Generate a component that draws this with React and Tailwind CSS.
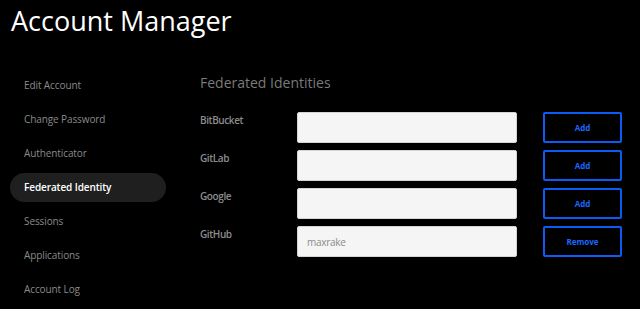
import { useState } from 'react'

const nav = [
  'Edit Account',
  'Change Password',
  'Authenticator',
  'Federated Identity',
  'Sessions',
  'Applications',
  'Account Log',
]

const providers = [
  { name: 'BitBucket', value: '' },
  { name: 'GitLab', value: '' },
  { name: 'Google', value: '' },
  { name: 'GitHub', value: 'maxrake' },
]

export default function App() {
  const [active, setActive] = useState('Federated Identity')

  return (
    <div className="w-[640px] h-[309px] overflow-hidden bg-black text-white" style={{ fontFamily: '"Open Sans", "Noto Sans", sans-serif' }}>
      <h1 className="pl-[11px] pt-[2px] text-[27px] leading-[38px] font-normal">Account Manager</h1>

      <div className="flex mt-[31px]">
        {/* sidebar */}
        <nav className="w-[200px] pl-[10px] flex flex-col gap-[5px]">
          {nav.map(item => (
            <button
              key={item}
              onClick={() => setActive(item)}
              className={`w-[156px] h-[29px] rounded-full pl-[14px] text-left text-[10px] tracking-[-0.1px] ${
                active === item ? 'bg-[#1f1f1f] text-white font-semibold' : 'text-[#8a8a8a]'
              }`}
            >
              {item}
            </button>
          ))}
        </nav>

        {/* content */}
        <section className="flex-1">
          <h2 className="text-[14px] leading-[24px] text-[#7a7a7a]">Federated Identities</h2>
          <div className="mt-[17px] flex flex-col gap-[7px]">
            {providers.map(p => (
              <div key={p.name} className="flex items-start">
                <div className="w-[97px] pt-[1px] text-[10px] font-semibold tracking-[-0.4px] text-[#8c8c8c]">{p.name}</div>
                <input
                  readOnly
                  value={p.value}
                  className="w-[220px] h-[31px] rounded-[2px] border border-[#d4d4d4] bg-[#f5f5f5] px-[9px] text-[10px] tracking-[-0.3px] text-[#8a8a8a] outline-none"
                />
                <button className="ml-[26px] w-[79px] h-[31px] rounded-[2px] border-2 border-[#0b5cf5] bg-black text-[8px] font-bold text-[#1a66ff]">
                  {p.value ? 'Remove' : 'Add'}
                </button>
              </div>
            ))}
          </div>
        </section>
      </div>
    </div>
  )
}
